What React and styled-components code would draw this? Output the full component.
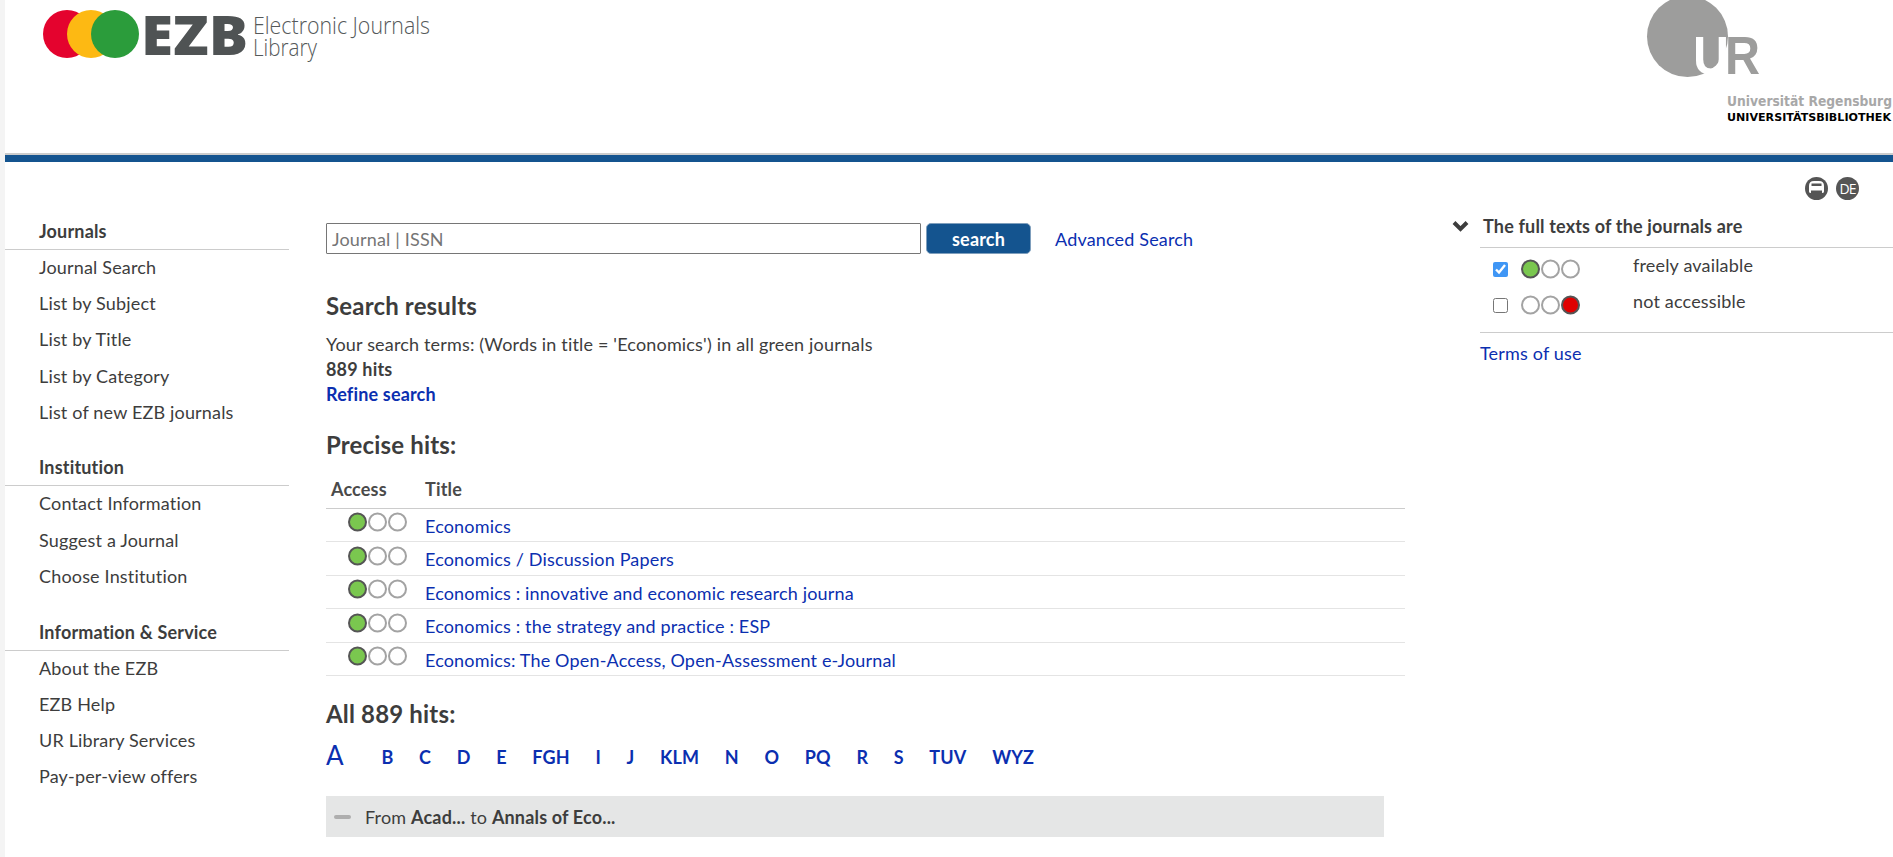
import React from 'react';
import styled, { createGlobalStyle } from 'styled-components';

const Global = createGlobalStyle`
  html, body { margin: 0; padding: 0; background: #f4f4f4; height: 100%; overflow: hidden; }
  body { font-family: Lato, "Open Sans", sans-serif; font-size: 18px; letter-spacing: 0.17px; color: #3d3d3d; }
  * { box-sizing: border-box; }
  a { color: #0b2fb0; text-decoration: none; }
`;

const Page = styled.div`
  margin-left: 5px; background: #fff; height: 857px; overflow: hidden;
`;
const Header = styled.header`
  height: 162px; display: flex; justify-content: space-between; align-items: flex-start;
  border-bottom: 7px solid #14548f; position: relative;
  &::after { content: ''; position: absolute; left: 0; right: 0; bottom: 0; height: 2px; background: #cccccc; }
`;
const Logo = styled.svg`display: block; flex: none;`;
const Tools = styled.div`
  display: flex; justify-content: flex-end; gap: 8px; padding: 15px 34px 0 0; height: 37px;
`;
const ToolIcon = styled.svg`display: block; flex: none;`;
const Columns = styled.div`display: flex; align-items: flex-start;`;
const Sidebar = styled.nav`width: 284px; flex: none; padding-top: 21px;`;
const NavSection = styled.section`margin-bottom: 26.5px;`;
const NavHeading = styled.div`
  font-weight: 700; line-height: 22px; padding: 0 0 7px 34px; border-bottom: 1px solid #cccccc; margin-bottom: -1px;
`;
const NavItem = styled.a`
  display: block; height: 36.2px; line-height: 36.2px; padding-left: 34px; color: #3d3d3d;
`;
const Main = styled.main`width: 1079px; margin-left: 37px; flex: none; padding-top: 24px;`;
const SearchRow = styled.form`display: flex; align-items: center; height: 31px;`;
const SearchInput = styled.input`
  width: 595px; height: 31px; border: 1px solid #767676; border-radius: 1px; padding: 0 5px;
  font: inherit; letter-spacing: inherit; color: #3d3d3d; background: #fff;
  &::placeholder { color: #757575; opacity: 1; }
`;
const SearchButton = styled.button`
  width: 105px; height: 31px; margin-left: 5px; border: 1px solid #7f9fbd; border-radius: 5px; background: #14548f;
  color: #fff; font: 700 18px Lato, sans-serif; letter-spacing: inherit;
`;
const AdvancedLink = styled.a`margin-left: 24px;`;
const Heading = styled.h2`
  font-size: 24px; font-weight: 700; line-height: 28px; margin: ${p => p.$top}px 0 0; color: #3d3d3d;
`;
const InfoLine = styled.div`
  line-height: 25px; font-weight: ${p => (p.$bold ? 700 : 400)};
`;
const Info = styled.div`margin-top: 12px;`;
const TableHead = styled.div`
  display: grid; grid-template-columns: 94px 1fr; height: 33px; margin-top: 16.5px; padding-left: 5px;
  border-bottom: 1px solid #cccccc; font-weight: 700; color: #4a4a4a; line-height: 26px;
`;
const Row = styled.div`
  display: grid; grid-template-columns: 22px 77px 1fr; height: 33.5px; border-bottom: 1px solid #e4e4e4;
  align-items: center;
`;
const Dots = styled.svg`display: block; grid-column: 2; margin-top: -5px;`;
const RowLink = styled.a`grid-column: 3; margin-top: 2px;`;
const Letters = styled.div`
  display: flex; align-items: center; gap: 25.6px; margin-top: 14px; height: 30px; font-weight: 700;
`;
const Letter = styled.a`
  ${p => p.$big && 'font-size: 26px; font-weight: 400; margin-right: 12px; margin-top: -4px;'}
`;
const Range = styled.div`
  width: 1058px; height: 41px; margin-top: 24px; background: #e5e6e6; display: flex; align-items: center; padding-left: 8px; gap: 14px;
`;
const Dash = styled.span`width: 17px; height: 4px; border-radius: 2px; background: #aeaeae; flex: none;`;
const Aside = styled.aside`flex: 1; margin-left: 45px; padding-top: 11px;`;
const AsideHeading = styled.div`
  display: flex; align-items: center; height: 37px; padding: 0 0 6px 2px; font-weight: 700; gap: 14px;
`;
const AsideList = styled.div`
  margin-left: 30px; border-top: 1px solid #cccccc; border-bottom: 1px solid #cccccc; height: 86px; padding-top: 1px;
`;
const AsideRow = styled.label`
  display: grid; grid-template-columns: 13px 15px 125px 1fr; height: 36px; align-items: center;
`;
const Check = styled.input`
  grid-column: 2; width: 15px; height: 15px; margin: 4px 0 0; accent-color: #3f96f5;
`;
const LegendDots = styled.svg`display: block; margin: 4px 0 0 13px;`;
const LegendText = styled.span`margin-top: -4px;`;
const Terms = styled.a`display: block; margin: 9px 0 0 30px; line-height: 22px;`;

const Traffic = ({ on, as: Comp = Dots }) => {
  const fills = { g: '#7ac74f', r: '#e00000' };
  const colors = [on === 'g' ? 'g' : null, null, on === 'r' ? 'r' : null];
  return (
    <Comp width="60" height="20" viewBox="0 0 60 20">
      {colors.map((c, i) => (i === (on === 'g' ? 0 : 2) ? null : (
        <circle key={i} cx={9.5 + i * 20} cy="10" r="8.5" fill="#fff" stroke="#a3a3a3" strokeWidth="2" />
      )))}
      {colors.map((c, i) => (c ? (
        <circle key={i} cx={9.5 + i * 20} cy="10" r="8.5" fill={fills[c]} stroke="#555" strokeWidth="2" />
      ) : null))}
    </Comp>
  );
};

const nav = [
  ['Journals', ['Journal Search', 'List by Subject', 'List by Title', 'List by Category', 'List of new EZB journals']],
  ['Institution', ['Contact Information', 'Suggest a Journal', 'Choose Institution']],
  ['Information & Service', ['About the EZB', 'EZB Help', 'UR Library Services', 'Pay-per-view offers']],
];
const titles = ['Economics', 'Economics / Discussion Papers', 'Economics : innovative and economic research journa', 'Economics : the strategy and practice : ESP', 'Economics: The Open-Access, Open-Assessment e-Journal'];
const letters = ['B', 'C', 'D', 'E', 'FGH', 'I', 'J', 'KLM', 'N', 'O', 'PQ', 'R', 'S', 'TUV', 'WYZ'];

export default function App() {
  return (
    <Page>
      <Global />
      <Header>
        <Logo width="440" height="80" viewBox="5 0 440 80">
          <circle cx="67" cy="34" r="24" fill="#e4032e" />
          <circle cx="91" cy="34" r="24" fill="#fdb913" />
          <circle cx="115" cy="34" r="24" fill="#2b9c3b" />
          <text x="141" y="55" fontFamily="'Open Sans', sans-serif" fontWeight="800" fontSize="54" letterSpacing="0" fill="#4f5354" textLength="107" lengthAdjust="spacingAndGlyphs">EZB</text>
          <text x="253" y="34" fontFamily="'Open Sans', sans-serif" fontWeight="300" fontSize="23" letterSpacing="0" fill="#55595a" textLength="177" lengthAdjust="spacingAndGlyphs">Electronic Journals</text>
          <text x="253" y="56" fontFamily="'Open Sans', sans-serif" fontWeight="300" fontSize="23" letterSpacing="0" fill="#55595a" textLength="64" lengthAdjust="spacingAndGlyphs">Library</text>
        </Logo>
        <Logo width="250" height="130" viewBox="1643 0 250 130">
          <circle cx="1687.5" cy="36.5" r="40.5" fill="#9d9d9c" />
          <text x="1693" y="74" fontFamily="'Liberation Sans', sans-serif" fontWeight="700" fontSize="54" letterSpacing="0" fill="#fff" textLength="36" lengthAdjust="spacingAndGlyphs">U</text>
          <text x="1725" y="74" fontFamily="'Liberation Sans', sans-serif" fontWeight="700" fontSize="54" letterSpacing="0" fill="#9d9d9c" textLength="35" lengthAdjust="spacingAndGlyphs">R</text>
          <text x="1727" y="106" fontFamily="'DejaVu Sans', sans-serif" fontWeight="700" fontSize="14" letterSpacing="0" fill="#a8a8a8" textLength="165" lengthAdjust="spacingAndGlyphs">Universität Regensburg</text>
          <text x="1727" y="121" fontFamily="'DejaVu Sans', sans-serif" fontWeight="700" fontSize="10.5" letterSpacing="0" fill="#000" textLength="164" lengthAdjust="spacingAndGlyphs">UNIVERSITÄTSBIBLIOTHEK</text>
        </Logo>
      </Header>
      <Tools>
        <ToolIcon width="23" height="23" viewBox="0 0 23 23">
          <circle cx="11.5" cy="11.5" r="11.5" fill="#555" />
          <path d="M4 9 Q4 4 9 4 H14 Q19 4 19 9 Z" fill="#fff" />
          <rect x="6.5" y="6.5" width="10" height="2.5" fill="#555" />
          <path d="M4 9 H19 V14.5 Q19 16 17 16 V13.5 H6 V16 Q4 16 4 14.5 Z" fill="#fff" />
        </ToolIcon>
        <ToolIcon width="23" height="23" viewBox="0 0 23 23">
          <circle cx="11.5" cy="11.5" r="11.5" fill="#555" />
          <text x="11.5" y="16.5" textAnchor="middle" fontFamily="'Open Sans', sans-serif" fontSize="14" letterSpacing="-1" fill="#fff">DE</text>
        </ToolIcon>
      </Tools>
      <Columns>
        <Sidebar>
          {nav.map(([head, items]) => (
            <NavSection key={head}>
              <NavHeading>{head}</NavHeading>
              {items.map(t => <NavItem key={t}>{t}</NavItem>)}
            </NavSection>
          ))}
        </Sidebar>
        <Main>
          <SearchRow>
            <SearchInput placeholder="Journal | ISSN" />
            <SearchButton type="button">search</SearchButton>
            <AdvancedLink>Advanced Search</AdvancedLink>
          </SearchRow>
          <Heading $top={38}>Search results</Heading>
          <Info>
            <InfoLine>Your search terms: (Words in title = 'Economics') in all green journals</InfoLine>
            <InfoLine $bold>889 hits</InfoLine>
            <InfoLine $bold><a>Refine search</a></InfoLine>
          </Info>
          <Heading $top={24}>Precise hits:</Heading>
          <TableHead><span>Access</span><span>Title</span></TableHead>
          {titles.map(t => (
            <Row key={t}>
              <Traffic on="g" />
              <RowLink>{t}</RowLink>
            </Row>
          ))}
          <Heading $top={24}>All 889 hits:</Heading>
          <Letters>
            <Letter $big>A</Letter>
            {letters.map(l => <Letter key={l}>{l}</Letter>)}
          </Letters>
          <Range><Dash /><span>From <b>Acad...</b> to <b>Annals of Eco...</b></span></Range>
        </Main>
        <Aside>
          <AsideHeading>
            <svg width="17" height="12" viewBox="0 0 17 12"><path d="M2 2.5 L8.5 9 L15 2.5" fill="none" stroke="#3d3d3d" strokeWidth="4" /></svg>
            <span>The full texts of the journals are</span>
          </AsideHeading>
          <AsideList>
            <AsideRow>
              <Check type="checkbox" defaultChecked />
              <Traffic on="g" as={LegendDots} />
              <LegendText>freely available</LegendText>
            </AsideRow>
            <AsideRow>
              <Check type="checkbox" />
              <Traffic on="r" as={LegendDots} />
              <LegendText>not accessible</LegendText>
            </AsideRow>
          </AsideList>
          <Terms>Terms of use</Terms>
        </Aside>
      </Columns>
    </Page>
  );
}
